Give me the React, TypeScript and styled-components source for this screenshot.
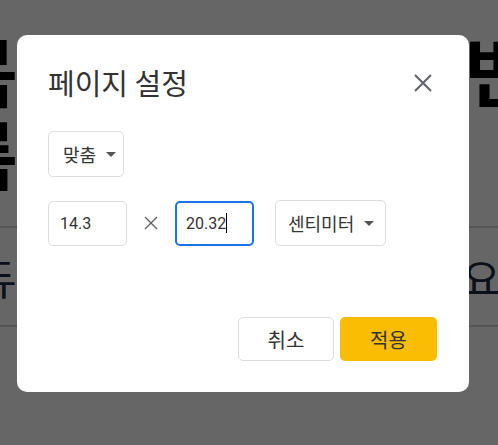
import React from 'react'
import styled, { createGlobalStyle } from 'styled-components'

const GlobalStyle = createGlobalStyle`
  html, body {
    margin: 0;
    padding: 0;
    width: 498px;
    height: 445px;
    overflow: hidden;
    font-family: Roboto, "Noto Sans CJK KR", sans-serif;
  }
`

const App = () => {
  return (
    <>
      <GlobalStyle />
      <Page>
        <Hero>
          <HeroCol>
            <Big>목</Big>
            <Big>름</Big>
          </HeroCol>
          <HeroCol>
            <Big>변</Big>
          </HeroCol>
        </Hero>
        <Divider />
        <SubRow>
          <SubText>듀</SubText>
          <SubText>요.</SubText>
        </SubRow>
        <Divider />
      </Page>

      <Overlay>
        <Dialog>
          <Header>
            <Title>페이지 설정</Title>
            <Close aria-label="닫기">
              <svg width="18" height="18" viewBox="0 0 18 18">
                <path d="M1 1 L17 17 M17 1 L1 17" stroke="#5f6368" strokeWidth="2" fill="none" />
              </svg>
            </Close>
          </Header>

          <FitRow>
            <Select $w={76} $pl={14}>
              맞춤
              <Arrow />
            </Select>
          </FitRow>

          <SizeRow>
            <Field>14.3</Field>
            <Times>
              <svg width="14" height="14" viewBox="0 0 14 14">
                <path d="M1 1 L13 13 M13 1 L1 13" stroke="#5f6368" strokeWidth="1.4" fill="none" />
              </svg>
            </Times>
            <Field $focused>
              20.32
              <Caret />
            </Field>
            <Select $w={111} $pl={12} $ml={21}>
              센티미터
              <Arrow />
            </Select>
          </SizeRow>

          <Footer>
            <Button>취소</Button>
            <Button $primary>적용</Button>
          </Footer>
        </Dialog>
      </Overlay>
    </>
  )
}

export default App

const Page = styled.div`
  width: 498px;
  height: 445px;
  background: #fff;
  overflow: hidden;
  font-family: "Noto Sans CJK KR", sans-serif;
  color: #000;
`

const Hero = styled.div`
  display: flex;
  justify-content: space-between;
  margin: 0 -36px 0 -52px;
  padding-top: 26px;
  height: 200px;
`

const HeroCol = styled.div`
  display: flex;
  flex-direction: column;
`

const Big = styled.div`
  font-size: 76px;
  line-height: 84px;
  font-weight: 700;
`

const Divider = styled.div`
  height: 2px;
  background: #d8d8d8;
`

const SubRow = styled.div`
  display: flex;
  justify-content: space-between;
  margin: 0 -14px 0 -22px;
  height: 97px;
  align-items: center;
`

const SubText = styled.div`
  font-size: 42px;
  color: #1f2a44;
`

const Overlay = styled.div`
  position: fixed;
  inset: 0;
  background: rgba(0, 0, 0, 0.6);
  padding: 35px 0 0 17px;
`

const Dialog = styled.div`
  width: 452px;
  height: 357px;
  box-sizing: border-box;
  background: #fff;
  border-radius: 10px;
  padding: 25px 31px 0 31px;
  display: flex;
  flex-direction: column;
`

const Header = styled.div`
  display: flex;
  align-items: center;
  justify-content: space-between;
  height: 44px;
`

const Title = styled.h2`
  margin: 0;
  font-size: 29px;
  font-weight: 400;
  color: #333;
  font-family: "Noto Sans CJK KR", sans-serif;
`

const Close = styled.button`
  border: 0;
  background: none;
  padding: 0;
  margin-right: 6px;
  margin-top: 2px;
  width: 18px;
  height: 18px;
  display: flex;
`

const FitRow = styled.div`
  display: flex;
  margin-top: 27px;
`

const Select = styled.div<{ $w: number; $pl: number; $ml?: number }>`
  box-sizing: border-box;
  width: ${p => p.$w}px;
  height: 46px;
  margin-left: ${p => p.$ml ?? 0}px;
  border: 1px solid #ddd;
  border-radius: 5px;
  display: flex;
  align-items: center;
  padding-left: ${p => p.$pl}px;
  gap: 10px;
  font-size: 18px;
  color: #333;
  font-family: "Noto Sans CJK KR", sans-serif;
`

const Arrow = styled.span`
  width: 0;
  height: 0;
  border-left: 5px solid transparent;
  border-right: 5px solid transparent;
  border-top: 5px solid #555;
`

const SizeRow = styled.div`
  display: flex;
  align-items: center;
  margin-top: 23px;
`

const Field = styled.div<{ $focused?: boolean }>`
  box-sizing: border-box;
  width: 79px;
  height: 45px;
  border: ${p => (p.$focused ? '2px solid #1a73e8' : '1px solid #ddd')};
  border-radius: 5px;
  display: flex;
  align-items: center;
  padding-left: ${p => (p.$focused ? 9 : 11)}px;
  font-size: 16px;
  color: #333;
`

const Caret = styled.span`
  width: 1px;
  height: 20px;
  background: #000;
`

const Times = styled.div`
  width: 48px;
  display: flex;
  justify-content: center;
`

const Footer = styled.div`
  margin-top: auto;
  margin-bottom: 31px;
  margin-right: 1px;
  display: flex;
  justify-content: flex-end;
  gap: 6px;
`

const Button = styled.button<{ $primary?: boolean }>`
  box-sizing: border-box;
  width: ${p => (p.$primary ? 97 : 96)}px;
  height: 44px;
  border-radius: 5px;
  border: ${p => (p.$primary ? '0' : '1px solid #ddd')};
  background: ${p => (p.$primary ? '#fbbc04' : '#fff')};
  font-size: 20px;
  color: #333;
  font-family: "Noto Sans CJK KR", sans-serif;
`
